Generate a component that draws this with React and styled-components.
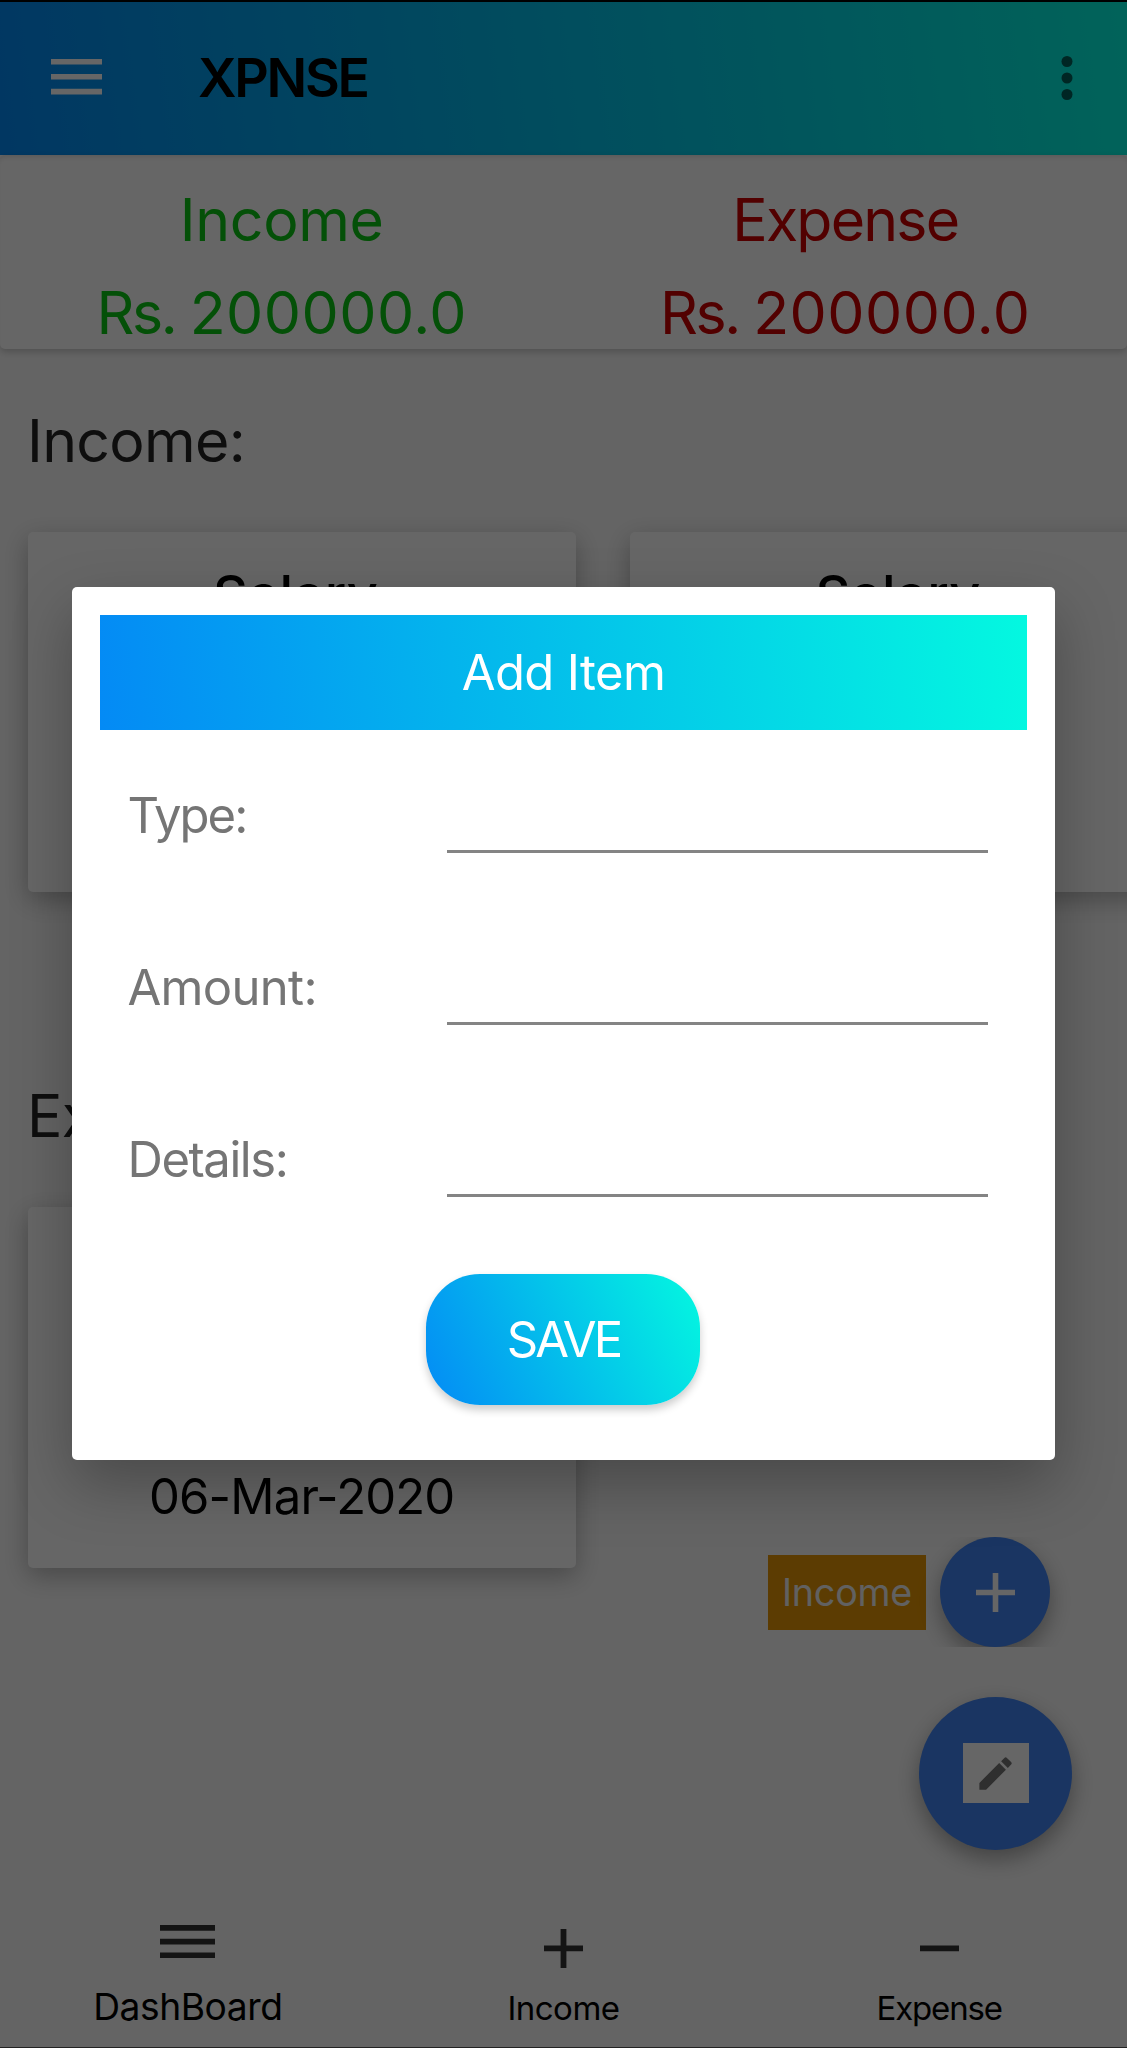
import React from "react";
import styled, { createGlobalStyle } from "styled-components";

const GlobalStyle = createGlobalStyle`
  *, *::before, *::after { box-sizing: border-box; }
  html, body { margin: 0; padding: 0; }
  body { font-family: Inter, Roboto, sans-serif; }
`;

const START = "#048af5";
const END = "#04f8e0";

const Screen = styled.div`
  position: relative;
  display: flex;
  flex-direction: column;
  width: 1127px;
  height: 2048px;
  overflow: hidden;
  background: #fafafa;
  color: #000;
  border-top: 2px solid #000;
  border-bottom: 1px solid #222;
`;

const Text = styled.span`
  display: block;
  white-space: nowrap;
  font-size: ${(p) => p.$size}px;
  line-height: ${(p) => p.$line}px;
  letter-spacing: ${(p) => p.$track || 0}px;
  font-weight: ${(p) => p.$weight || 400};
  color: ${(p) => p.$color || "inherit"};
`;

const Currency = styled.span`
  letter-spacing: -2.4px;
`;

const Toolbar = styled.header`
  display: flex;
  align-items: center;
  flex: none;
  height: 152.5px;
  padding: 0 54px 0 51px;
  background: linear-gradient(82.3deg, ${START}, ${END});
`;

const ToolbarTitle = styled.h1`
  flex: 1;
  margin: 0 0 0 96px;
  font-size: 53.6px;
  line-height: 64px;
  font-weight: 560;
  letter-spacing: -2.3px;
`;

const Icon = styled.svg`
  display: block;
  flex: none;
`;

const MenuIcon = styled(Icon)`
  margin-bottom: 2px;
`;

const Summary = styled.section`
  display: flex;
  flex: none;
  height: 194.5px;
  padding-top: 18px;
  border-radius: 5px;
  background: #fff;
  box-shadow: 0 3px 7px rgba(0, 0, 0, 0.2), inset 0 5px 5px -3px rgba(0, 0, 0, 0.12);
`;

const SummaryColumn = styled.div`
  flex: 1;
  display: flex;
  flex-direction: column;
  align-items: center;
  color: ${(p) => p.$color};
`;

const SectionTitle = styled.h2`
  flex: none;
  margin: ${(p) => p.$top}px 0 0 27px;
  font-size: 59px;
  line-height: 72px;
  font-weight: 400;
  letter-spacing: -0.7px;
  color: #242424;
`;

const CardRow = styled.div`
  display: flex;
  flex: none;
  gap: 54.5px;
  margin-top: ${(p) => p.$top}px;
  padding-left: 27.7px;
`;

const Card = styled.article`
  display: flex;
  flex-direction: column;
  align-items: center;
  justify-content: ${(p) => (p.$end ? "flex-end" : "flex-start")};
  flex: none;
  width: 548px;
  height: 360.3px;
  padding: 32px 12px 41px 0;
  padding-right: ${(p) => (p.$end ? 0 : 12)}px;
  border-radius: 5px;
  background: #fff;
  box-shadow: 0 8px 26px rgba(0, 0, 0, 0.28);
`;

const Spacer = styled.div`
  flex: 1;
`;

const BottomNav = styled.nav`
  display: grid;
  grid-template-columns: repeat(3, 1fr);
  flex: none;
  height: 151.5px;
`;

const NavItem = styled.a`
  display: flex;
  flex-direction: column;
  align-items: center;
  gap: ${(p) => (p.$active ? 28.5 : 20.5)}px;
  padding-top: ${(p) => (p.$active ? 29 : 33)}px;
`;

const SpeedDial = styled.div`
  position: absolute;
  right: 0;
  top: 1535px;
  display: flex;
  align-items: center;
  height: 110px;
  padding: 0 77px 0 20px;
  gap: 14px;
  overflow: hidden;
`;

const DialLabel = styled.div`
  display: flex;
  align-items: center;
  justify-content: center;
  width: 158px;
  height: 75px;
  background: #e69705;
`;

const RoundButton = styled.button`
  display: flex;
  align-items: center;
  justify-content: center;
  width: ${(p) => p.$size}px;
  height: ${(p) => p.$size}px;
  padding: 0;
  border: 0;
  border-radius: 50%;
  background: #4285f4;
  box-shadow: 0 9px 22px rgba(0, 0, 0, 0.34);
`;

const EditFab = styled(RoundButton)`
  position: absolute;
  right: 54.7px;
  top: 1694.5px;
`;

const EditTile = styled.span`
  display: flex;
  align-items: center;
  justify-content: center;
  width: 66px;
  height: 60px;
  background: #fff;
`;

const Scrim = styled.div`
  position: absolute;
  inset: 0;
  display: flex;
  align-items: center;
  justify-content: center;
  padding-bottom: 2px;
  background: rgba(0, 0, 0, 0.6);
`;

const Dialog = styled.form`
  display: flex;
  flex-direction: column;
  width: 982.4px;
  height: 872.2px;
  padding: 27.3px 27.7px;
  border-radius: 5px;
  background: #fff;
  box-shadow: 0 24px 60px rgba(0, 0, 0, 0.28);
`;

const DialogTitle = styled.div`
  display: flex;
  align-items: center;
  justify-content: center;
  flex: none;
  height: 115px;
  padding-top: 1px;
  background: linear-gradient(82.9deg, ${START}, ${END});
`;

const Field = styled.label`
  display: flex;
  align-items: center;
  justify-content: space-between;
  flex: none;
  height: 172px;
  padding: 0 39px 0 27.5px;
`;

const Input = styled.input`
  width: 541px;
  height: 75px;
  padding: 0;
  border: 0;
  border-bottom: 3px solid #848484;
  outline: 0;
  background: transparent;
  font: inherit;
`;

const SaveButton = styled.button`
  align-self: center;
  flex: none;
  width: 274px;
  height: 131.6px;
  margin-top: 28px;
  padding: 0;
  border: 0;
  border-radius: 54px;
  background: linear-gradient(64.35deg, ${START}, ${END});
  box-shadow: 0 5px 9px rgba(0, 0, 0, 0.2);
  font: 400 49px Inter, Roboto, sans-serif;
  letter-spacing: -2.9px;
  color: #fff;
`;

const totals = [
  { name: "Income", amount: "200000.0", color: "#0cc814", track: -0.35 },
  { name: "Expense", amount: "200000.0", color: "#cc0000", track: -1.8 },
];

const fields = [
  { name: "Type:", track: -2 },
  { name: "Amount:", track: -0.68 },
  { name: "Details:", track: -1.44 },
];

export default function App() {
  return (
    <>
      <GlobalStyle />
      <Screen>
        <Toolbar>
          <MenuIcon width="51" height="36" viewBox="0 0 51 36" fill="#fff">
            <path d="M0 0h51v5.6H0zM0 15h51v5.6H0zM0 29.8h51v5.6H0z" />
          </MenuIcon>
          <ToolbarTitle>XPNSE</ToolbarTitle>
          <Icon width="12" height="46" viewBox="0 0 12 46" fill="rgba(0,0,0,.6)">
            <circle cx="6" cy="6.5" r="5.5" />
            <circle cx="6" cy="23" r="5.5" />
            <circle cx="6" cy="39.5" r="5.5" />
          </Icon>
        </Toolbar>

        <Summary>
          {totals.map((t) => (
            <SummaryColumn key={t.name} $color={t.color}>
              <Text $size={59} $line={93} $track={t.track}>{t.name}</Text>
              <Text $size={59} $line={93} $track={0.5}>
                <Currency>Rs. </Currency>
                {t.amount}
              </Text>
            </SummaryColumn>
          ))}
        </Summary>

        <SectionTitle $top={55.5}>Income:</SectionTitle>
        <CardRow $top={55}>
          <Card>
            <Text $size={54} $line={62} $track={0.45} $weight={500}>Salary</Text>
          </Card>
          <Card>
            <Text $size={54} $line={62} $track={0.45} $weight={500}>Salary</Text>
          </Card>
        </CardRow>

        <SectionTitle $top={188.5}>Expense:</SectionTitle>
        <CardRow $top={55}>
          <Card $end>
            <Text $size={49} $line={60} $track={-0.83}>06-Mar-2020</Text>
          </Card>
        </CardRow>

        <Spacer />

        <BottomNav>
          <NavItem $active>
            <Icon width="55" height="33.5" viewBox="0 0 55 33.5" fill="#333">
              <path d="M0 0h55v5.8H0zM0 13.8h55v5.8H0zM0 27.5h55v5.8H0z" />
            </Icon>
            <Text $size={37.2} $line={40} $track={-0.45}>DashBoard</Text>
          </NavItem>
          <NavItem>
            <Icon width="39" height="39" viewBox="0 0 39 39" fill="#333">
              <path d="M0 16.5h39v5.8H0zM16.6 0h5.8v39h-5.8z" />
            </Icon>
            <Text $size={33} $line={40} $track={-0.5}>Income</Text>
          </NavItem>
          <NavItem>
            <Icon width="39" height="39" viewBox="0 0 39 39" fill="#333">
              <path d="M0 16.5h39v5.8H0z" />
            </Icon>
            <Text $size={33} $line={40} $track={-1.15}>Expense</Text>
          </NavItem>
        </BottomNav>

        <SpeedDial>
          <DialLabel>
            <Text $size={37.7} $line={46} $track={-0.25} $color="#f2f2f2">Income</Text>
          </DialLabel>
          <RoundButton $size={110}>
            <Icon width="39" height="39" viewBox="0 0 39 39" fill="#fff">
              <path d="M0 16.7h39v5.6H0zM16.7 0h5.6v39h-5.6z" />
            </Icon>
          </RoundButton>
        </SpeedDial>

        <EditFab $size={153.5}>
          <EditTile>
            <Icon width="43" height="43" viewBox="0 0 24 24" fill="#757575">
              <path d="M3 17.25V21h3.75L17.81 9.94l-3.75-3.75L3 17.25zM20.71 7.04a1 1 0 0 0 0-1.41l-2.34-2.34a1 1 0 0 0-1.41 0l-1.83 1.83 3.75 3.75 1.83-1.83z" />
            </Icon>
          </EditTile>
        </EditFab>

        <Scrim>
          <Dialog>
            <DialogTitle>
              <Text $size={49} $line={60} $track={-0.64} $color="#fff">Add Item</Text>
            </DialogTitle>
            {fields.map((f) => (
              <Field key={f.name}>
                <Text $size={49} $line={60} $track={f.track} $color="#757575">{f.name}</Text>
                <Input type="text" />
              </Field>
            ))}
            <SaveButton type="button">SAVE</SaveButton>
          </Dialog>
        </Scrim>
      </Screen>
    </>
  );
}
